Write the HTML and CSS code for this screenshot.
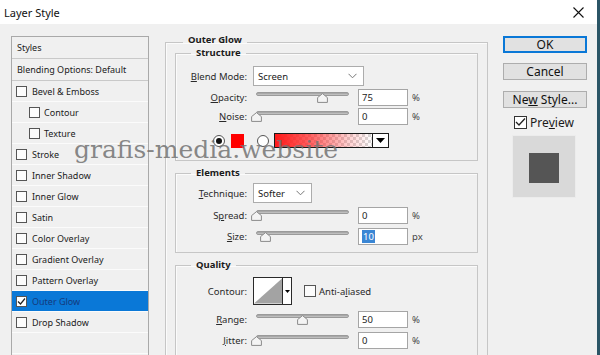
FILE: index.html
```html
<!DOCTYPE html>
<html>
<head>
<meta charset="utf-8">
<title>Layer Style</title>
<link rel="stylesheet" href="styles.css">
</head>
<body>
<div class="window">
  <div class="titlebar">
    <span class="title">Layer Style</span>
    <svg class="close" width="11" height="11" viewBox="0 0 11 11"><path d="M0.5 0.5 L10.5 10.5 M10.5 0.5 L0.5 10.5" stroke="#111" stroke-width="1.1" fill="none"/></svg>
  </div>
  <div class="content">
    <div class="styles-list">
      <div class="row head">Styles</div>
      <div class="row head">Blending Options: Default</div>
      <div class="row"><span class="cb"></span>Bevel &amp; Emboss</div>
      <div class="row sub"><span class="cb"></span>Contour</div>
      <div class="row sub"><span class="cb"></span>Texture</div>
      <div class="row"><span class="cb"></span>Stroke</div>
      <div class="row"><span class="cb"></span>Inner Shadow</div>
      <div class="row"><span class="cb"></span>Inner Glow</div>
      <div class="row"><span class="cb"></span>Satin</div>
      <div class="row"><span class="cb"></span>Color Overlay</div>
      <div class="row"><span class="cb"></span>Gradient Overlay</div>
      <div class="row"><span class="cb"></span>Pattern Overlay</div>
      <div class="row selected"><span class="cb checked"><svg width="9" height="9" viewBox="0 0 9 9"><path d="M1 4.5 L3.5 7 L8 1.5" stroke="#222" stroke-width="1.2" fill="none"/></svg></span>Outer Glow</div>
      <div class="row"><span class="cb"></span>Drop Shadow</div>
      <div class="row"></div>
    </div>

    <div class="main">
      <fieldset class="group outer">
        <legend>Outer Glow</legend>

        <fieldset class="group structure">
          <legend>Structure</legend>
          <div class="frow first">
            <label class="lbl"><u>B</u>lend Mode:</label>
            <div class="select blend"><span>Screen</span><svg width="9" height="6" viewBox="0 0 9 6"><path d="M0.5 0.8 L4.5 4.8 L8.5 0.8" stroke="#777" stroke-width="1" fill="none"/></svg></div>
          </div>
          <div class="frow">
            <label class="lbl"><u>O</u>pacity:</label>
            <div class="slider"><div class="track"></div><svg class="thumb" style="left:64px" width="11" height="10" viewBox="0 0 11 10"><path d="M5.5 0.6 L10.4 4.6 L10.4 9.4 L0.6 9.4 L0.6 4.6 Z" fill="#f4f4f4" stroke="#8a8a8a" stroke-width="1"/></svg></div>
            <div class="num">75</div><span class="unit">%</span>
          </div>
          <div class="frow tight">
            <label class="lbl"><u>N</u>oise:</label>
            <div class="slider"><div class="track"></div><svg class="thumb" style="left:-2px" width="11" height="10" viewBox="0 0 11 10"><path d="M5.5 0.6 L10.4 4.6 L10.4 9.4 L0.6 9.4 L0.6 4.6 Z" fill="#f4f4f4" stroke="#8a8a8a" stroke-width="1"/></svg></div>
            <div class="num">0</div><span class="unit">%</span>
          </div>
          <div class="colorrow">
            <span class="radio on"></span>
            <span class="swatch"></span>
            <span class="radio"></span>
            <div class="gradient"><div class="grad-fill"></div><div class="grad-drop"><svg width="9" height="5" viewBox="0 0 9 5"><path d="M0 0 L9 0 L4.5 5 Z" fill="#000"/></svg></div></div>
          </div>
        </fieldset>

        <fieldset class="group elements">
          <legend>Elements</legend>
          <div class="frow first">
            <label class="lbl"><u>T</u>echnique:</label>
            <div class="select tech"><span>Softer</span><svg width="9" height="6" viewBox="0 0 9 6"><path d="M0.5 0.8 L4.5 4.8 L8.5 0.8" stroke="#777" stroke-width="1" fill="none"/></svg></div>
          </div>
          <div class="frow">
            <label class="lbl">S<u>p</u>read:</label>
            <div class="slider"><div class="track"></div><svg class="thumb" style="left:-2px" width="11" height="10" viewBox="0 0 11 10"><path d="M5.5 0.6 L10.4 4.6 L10.4 9.4 L0.6 9.4 L0.6 4.6 Z" fill="#f4f4f4" stroke="#8a8a8a" stroke-width="1"/></svg></div>
            <div class="num">0</div><span class="unit">%</span>
          </div>
          <div class="frow">
            <label class="lbl"><u>S</u>ize:</label>
            <div class="slider"><div class="track"></div><svg class="thumb" style="left:7px" width="11" height="10" viewBox="0 0 11 10"><path d="M5.5 0.6 L10.4 4.6 L10.4 9.4 L0.6 9.4 L0.6 4.6 Z" fill="#f4f4f4" stroke="#8a8a8a" stroke-width="1"/></svg></div>
            <div class="num"><span class="sel">10</span></div><span class="unit">px</span>
          </div>
        </fieldset>

        <fieldset class="group quality">
          <legend>Quality</legend>
          <div class="frow contour-row">
            <label class="lbl">Contour:</label>
            <div class="contour">
              <div class="contour-pic"><svg width="29" height="26" viewBox="0 0 29 26"><path d="M29 0 L29 26 L0 26 Z" fill="#a3a3a3"/></svg></div>
              <div class="contour-drop"><svg width="5" height="3" viewBox="0 0 5 3"><path d="M0 0 L5 0 L2.5 3 Z" fill="#000"/></svg></div>
            </div>
            <span class="cb aa"></span><span class="aa-text">Anti-a<u>l</u>iased</span>
          </div>
          <div class="frow range">
            <label class="lbl"><u>R</u>ange:</label>
            <div class="slider"><div class="track"></div><svg class="thumb" style="left:44px" width="11" height="10" viewBox="0 0 11 10"><path d="M5.5 0.6 L10.4 4.6 L10.4 9.4 L0.6 9.4 L0.6 4.6 Z" fill="#f4f4f4" stroke="#8a8a8a" stroke-width="1"/></svg></div>
            <div class="num">50</div><span class="unit">%</span>
          </div>
          <div class="frow">
            <label class="lbl"><u>J</u>itter:</label>
            <div class="slider"><div class="track"></div><svg class="thumb" style="left:-2px" width="11" height="10" viewBox="0 0 11 10"><path d="M5.5 0.6 L10.4 4.6 L10.4 9.4 L0.6 9.4 L0.6 4.6 Z" fill="#f4f4f4" stroke="#8a8a8a" stroke-width="1"/></svg></div>
            <div class="num">0</div><span class="unit">%</span>
          </div>
        </fieldset>
      </fieldset>
    </div>

    <div class="side">
      <button class="btn primary">OK</button>
      <button class="btn">Cancel</button>
      <button class="btn">Ne<u>w</u> Style...</button>
      <div class="preview-check"><span class="pcb"><svg width="11" height="10" viewBox="0 0 11 10"><path d="M1 5 L4 8 L10 1.5" stroke="#222" stroke-width="1.3" fill="none"/></svg></span>Pre<u>v</u>iew</div>
      <div class="preview-box"><div class="preview-square"></div></div>
    </div>
  </div>
  <div class="watermark">grafis-media.website</div>
</div>
</body>
</html>
```

FILE: styles.css
```css
* { box-sizing: border-box; }
html, body { margin: 0; padding: 0; }
body {
  width: 600px;
  height: 355px;
  overflow: hidden;
  background: #f0f0f0;
  font-family: "Noto Sans", "Open Sans", sans-serif;
  color: #1b1b1b;
}
.window {
  position: relative;
  width: 600px;
  height: 355px;
  border-right: 3px solid #2b5566;
  overflow: hidden;
}
.titlebar {
  height: 24px;
  background: #ffffff;
  display: flex;
  align-items: center;
  justify-content: space-between;
  padding: 0 13px 0 4px;
}
.title { font-size: 11px; color: #111; }
.content {
  display: flex;
  align-items: flex-start;
  padding: 12px 0 0 11px;
}

/* Styles list */
.styles-list {
  width: 138px;
  height: 340px;
  border: 1px solid #a9a9a9;
  background: #f0f0f0;
  font-size: 9px;
  flex: none;
}
.row {
  height: 21px;
  display: flex;
  align-items: center;
  border-bottom: 1px solid #fbfbfb;
  color: #1b1b1b;
}
.row.head {
  height: 22px;
  padding-left: 5px;
  border-bottom: 1px solid #c9c9c9;
}
.row .cb { margin: 0 5px 0 4px; }
.row.sub .cb { margin-left: 17px; margin-right: 4px; }
.row.selected {
  background: #0a78d7;
  color: #143a7c;
}
.cb {
  width: 11px;
  height: 11px;
  border: 1px solid #555;
  background: #fcfcfc;
  display: inline-flex;
  align-items: center;
  justify-content: center;
  flex: none;
}
.cb.checked { background: #ffffff; }

/* Main panel */
.main {
  margin-left: 16px;
  margin-top: -2px;
  width: 323px;
  flex: none;
}
fieldset.group {
  margin: 0;
  min-width: 0;
  border: 1px solid #c6c6c6;
  box-shadow: inset 1px 1px 0 #fbfbfb;
}
fieldset.group legend {
  font-size: 9.5px;
  line-height: 12px;
  font-weight: bold;
  padding: 0 5px;
  color: #1b1b1b;
}
fieldset.outer {
  height: 332px;
  padding: 0 9px;
}
fieldset.outer > legend {
  margin-left: 8px;
  padding-bottom: 5px;
}
fieldset.outer fieldset.group {
  padding: 0 0 12px 0;
}
fieldset.outer fieldset.group > legend { margin-left: 15px; }
fieldset.structure { margin-top: -4px !important; }
fieldset.elements { margin-top: 6px !important; padding-bottom: 7px !important; }
fieldset.quality { margin-top: 6px !important; }

.frow {
  display: flex;
  align-items: center;
  height: 17px;
  margin-top: 4px;
  font-size: 9.5px;
}
.frow.first { height: 20px; margin-top: 6px; }
.structure .frow.first { margin-top: 7px; }
.structure .frow:not(.first) { margin-top: 3px; }
.structure .frow.tight { margin-top: 2px; }
.elements .frow.first { margin-top: 4px; }
.lbl {
  width: 72px;
  text-align: right;
  padding-right: 1px;
  color: #2a2a2a;
  flex: none;
}
.select {
  margin-left: 5px;
  height: 20px;
  background: #ffffff;
  border: 1px solid #acacac;
  display: flex;
  align-items: center;
  justify-content: space-between;
  padding: 0 6px 0 4px;
}
.select.blend { width: 111px; }
.select.tech { width: 59px; }

.slider {
  position: relative;
  width: 100px;
  height: 17px;
  margin-left: 5px;
  flex: none;
}
.track {
  position: absolute;
  left: 3px;
  right: 4px;
  top: 3px;
  height: 4px;
  border-radius: 2px;
  background: linear-gradient(#9d9d9d, #c9c9c9);
  border: 1px solid #9a9a9a;
}
.thumb { position: absolute; top: 4px; }
.num {
  width: 50px;
  height: 17px;
  margin-left: 5px;
  background: #ffffff;
  border: 1px solid #a5a5a5;
  padding-left: 3px;
  display: flex;
  align-items: center;
  color: #222;
}
.sel { background: #3a86d4; color: #fff; padding: 0 1px; }
.unit { margin-left: 4px; color: #444; }

/* Colour row */
.colorrow {
  display: flex;
  align-items: center;
  height: 15px;
  margin-top: 8px;
  padding-left: 37px;
}
.radio {
  width: 12px;
  height: 12px;
  border-radius: 50%;
  border: 1px solid #555;
  background: #fff;
  display: inline-flex;
  align-items: center;
  justify-content: center;
  flex: none;
}
.radio.on::after {
  content: "";
  width: 6px;
  height: 6px;
  border-radius: 50%;
  background: #111;
}
.swatch {
  width: 13px;
  height: 14px;
  background: #ff0000;
  margin: 0 13px 0 6px;
  flex: none;
}
.gradient {
  margin-left: 5px;
  width: 115px;
  height: 15px;
  border: 1px solid #1a1a1a;
  display: flex;
  background-color: #ffffff;
  background-image: conic-gradient(#d8d8d8 25%, #ffffff 0 50%, #d8d8d8 0 75%, #ffffff 0);
  background-size: 6px 6px;
}
.grad-fill {
  flex: 1;
  background: linear-gradient(to right, #ff1a1a 0%, rgba(255, 40, 40, 0.75) 35%, rgba(255, 60, 60, 0.25) 75%, rgba(255, 80, 80, 0) 100%);
}
.grad-drop {
  width: 16px;
  background: #ffffff;
  border-left: 1px solid #1a1a1a;
  display: flex;
  align-items: center;
  justify-content: center;
}

/* Quality */
.frow.contour-row { height: 28px; margin-top: 6px; }
.contour {
  margin-left: 5px;
  width: 39px;
  height: 28px;
  border: 1px solid #2a2a2a;
  display: flex;
  background: #fff;
}
.contour-pic { width: 28px; display: flex; }
.contour-drop {
  flex: 1;
  border-left: 1px solid #2a2a2a;
  display: flex;
  align-items: center;
  justify-content: center;
}
.cb.aa { width: 12px; height: 12px; margin-left: 12px; }
.aa-text { margin-left: 3px; color: #2a2a2a; }
.frow.range { margin-top: 6px; }

/* Right column */
.side {
  margin-left: 15px;
  width: 84px;
  display: flex;
  flex-direction: column;
  flex: none;
}
.btn {
  width: 84px;
  height: 17px;
  margin: 0 0 11px 0;
  padding: 0;
  font-family: "Noto Sans", "Open Sans", sans-serif;
  font-size: 12px;
  line-height: 14px;
  color: #111;
  background: #e1e1e1;
  border: 1px solid #adadad;
}
.btn.primary { border: 2px solid #0a78d7; margin-bottom: 10px; }
.preview-check {
  display: flex;
  align-items: center;
  font-size: 12px;
  margin: -4px 0 0 11px;
  height: 14px;
}
.pcb {
  width: 13px;
  height: 13px;
  border: 1px solid #333;
  background: #fff;
  margin-right: 3px;
  display: inline-flex;
  align-items: center;
  justify-content: center;
}
.preview-box {
  margin: 6px 0 0 9px;
  width: 64px;
  height: 63px;
  background: #d9d9d9;
  border: 1px solid #ececec;
  display: flex;
  align-items: center;
  justify-content: center;
  padding-top: 2px;
}
.preview-square {
  width: 30px;
  height: 30px;
  background: #555555;
}

/* Watermark overlay */
.watermark {
  position: absolute;
  left: 74px;
  top: 135px;
  font-family: "DejaVu Serif", serif;
  font-size: 25px;
  color: rgba(115, 115, 115, 0.85);
  pointer-events: none;
}
```
